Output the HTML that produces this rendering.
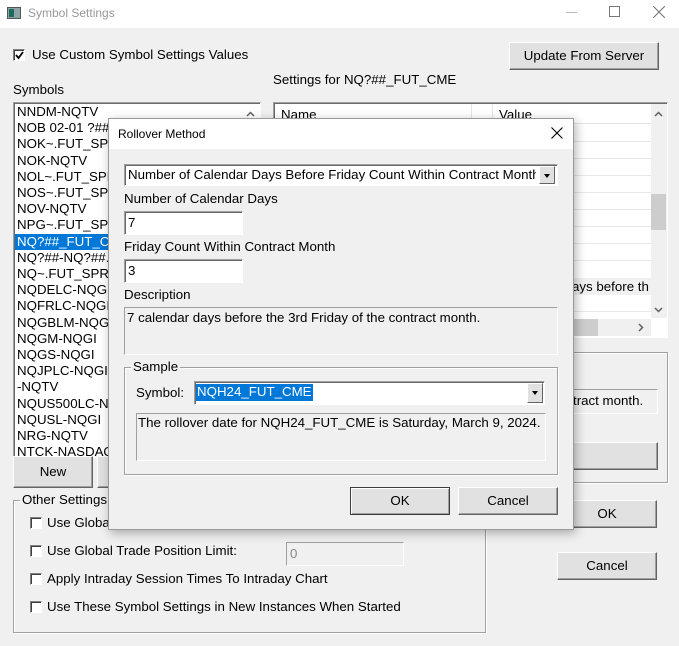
<!DOCTYPE html>
<html><head><meta charset="utf-8"><style>
*{box-sizing:border-box;margin:0;padding:0}
body{width:679px;height:646px;background:#f0f0f0;font-family:"Liberation Sans",Arial,sans-serif;font-size:13.3px;color:#000;position:relative;overflow:hidden}
.a{position:absolute;white-space:nowrap;line-height:16px}
.btn{position:absolute;background:#e1e1e1;border:1px solid;border-color:#fff #646464 #646464 #fff;box-shadow:inset -1px -1px 0 #a0a0a0;text-align:center}
.sunk{position:absolute;background:#fff;border:1px solid;border-color:#a0a0a0 #fff #fff #a0a0a0;box-shadow:inset 1px 1px 0 #696969}
.ro{position:absolute;border:1px solid;border-color:#a0a0a0 #fff #fff #a0a0a0;background:#f0f0f0}
.cb{position:absolute;width:12px;height:12px;background:#fff;border:1px solid;border-color:#808080 #fff #fff #808080;box-shadow:inset 1px 1px 0 #404040}
.grp{position:absolute;border:1px solid #a0a0a0;box-shadow:1px 1px 0 #fff inset,1px 1px 0 #fff}
.gl{position:absolute;background:#f0f0f0;padding:0 2px;line-height:16px}
.dd{position:absolute;width:16px;background:#e1e1e1;border:1px solid;border-color:#fff #646464 #646464 #fff}
.dd:after{content:"";position:absolute;left:4px;top:7px;border:3.5px solid transparent;border-top:4px solid #000;border-bottom:0}
</style></head><body>
<div class="a" style="left:0;top:0;width:679px;height:28px;background:#fff"></div>
<div class="a" style="left:7px;top:7px;width:14px;height:12px;background:#8ea3a6;border:1px solid #555"></div>
<div class="a" style="left:9px;top:9px;width:5px;height:8px;background:#1d6b5c"></div>
<div class="a" style="left:28px;top:5px;color:#999;font-size:12px">Symbol Settings</div>
<div class="a" style="left:566px;top:12px;width:11px;height:1px;background:#bbb"></div>
<div class="a" style="left:609px;top:6px;width:11px;height:11px;border:1px solid #777"></div>
<svg class="a" style="left:653px;top:6px" width="12" height="12"><path d="M0 0L12 12M12 0L0 12" stroke="#777" stroke-width="1.1"/></svg>

<div class="cb" style="left:13px;top:49px;background:#fff"></div>
<svg class="a" style="left:15px;top:51px" width="9" height="9"><path d="M1 4L3.5 7L8 1" stroke="#000" stroke-width="1.8" fill="none"/></svg>
<div class="a" style="left:32px;top:47px">Use Custom Symbol Settings Values</div>
<div class="btn" style="left:509px;top:42px;width:150px;height:28px;line-height:25px">Update From Server</div>
<div class="a" style="left:13px;top:82px">Symbols</div>
<div class="a" style="left:273px;top:72px">Settings for NQ?##_FUT_CME</div>

<div class="sunk" style="left:13px;top:102px;width:248px;height:356px;overflow:hidden">
<div style="position:absolute;left:3px;top:1px;line-height:16.2px">
<div>NNDM-NQTV</div><div>NOB 02-01 ?##.FUT</div><div>NOK~.FUT_SPR</div><div>NOK-NQTV</div><div>NOL~.FUT_SPR</div><div>NOS~.FUT_SPR</div><div>NOV-NQTV</div><div>NPG~.FUT_SPR</div>
<div style="background:#0078d7;color:#fff;margin-left:-2px;padding-left:2px;width:240px">NQ?##_FUT_CME</div>
<div>NQ?##-NQ?##.FUT</div><div>NQ~.FUT_SPR</div><div>NQDELC-NQGI</div><div>NQFRLC-NQGI</div><div>NQGBLM-NQGI</div><div>NQGM-NQGI</div><div>NQGS-NQGI</div><div>NQJPLC-NQGI</div><div>-NQTV</div><div>NQUS500LC-NQGI</div><div>NQUSL-NQGI</div><div>NRG-NQTV</div><div>NTCK-NASDAQ</div></div>
</div>
<svg class="a" style="left:246px;top:111px" width="9" height="6"><path d="M1 5L4.5 1.5L8 5" stroke="#606060" stroke-width="1.5" fill="none"/></svg>
<div class="btn" style="left:13px;top:456px;width:80px;height:32px;line-height:29px">New</div>
<div class="btn" style="left:97px;top:456px;width:80px;height:32px"></div>

<div class="grp" style="left:13px;top:500px;width:473px;height:133px"></div>
<div class="gl" style="left:20px;top:492px">Other Settings</div>
<div class="cb" style="left:30px;top:517px"></div><div class="a" style="left:47px;top:515px">Use Global</div>
<div class="ro" style="left:286px;top:516px;width:118px;height:14px"></div>
<div class="cb" style="left:30px;top:545px"></div><div class="a" style="left:47px;top:543px">Use Global Trade Position Limit:</div>
<div class="ro" style="left:286px;top:542px;width:118px;height:24px"><span style="position:absolute;left:3px;top:3px;color:#888">0</span></div>
<div class="cb" style="left:30px;top:573px"></div><div class="a" style="left:47px;top:571px">Apply Intraday Session Times To Intraday Chart</div>
<div class="cb" style="left:30px;top:601px"></div><div class="a" style="left:47px;top:599px">Use These Symbol Settings in New Instances When Started</div>

<div class="sunk" style="left:273px;top:102px;width:395px;height:236px;background:#fff"></div>
<div class="a" style="left:275px;top:104px;width:376px;height:20px;background:#fff;border-bottom:1px solid #e5e5e5"></div>
<div class="a" style="left:471px;top:104px;width:1px;height:20px;background:#e5e5e5"></div>
<div class="a" style="left:492px;top:104px;width:1px;height:20px;background:#e5e5e5"></div>
<div class="a" style="left:281px;top:107px">Name</div><div class="a" style="left:499px;top:107px">Value</div>
<div class="a" style="left:572px;top:141px;width:79px;height:1px;background:#e8e8e8"></div>
<div class="a" style="left:572px;top:158px;width:79px;height:1px;background:#e8e8e8"></div>
<div class="a" style="left:572px;top:175px;width:79px;height:1px;background:#e8e8e8"></div>
<div class="a" style="left:572px;top:192px;width:79px;height:1px;background:#e8e8e8"></div>
<div class="a" style="left:572px;top:209px;width:79px;height:1px;background:#e8e8e8"></div>
<div class="a" style="left:572px;top:226px;width:79px;height:1px;background:#e8e8e8"></div>
<div class="a" style="left:572px;top:243px;width:79px;height:1px;background:#e8e8e8"></div>
<div class="a" style="left:572px;top:260px;width:79px;height:1px;background:#e8e8e8"></div>
<div class="a" style="left:572px;top:278px;width:79px;height:17px;background:#f0f0f0;line-height:17px;overflow:hidden">ays before th</div>
<div class="a" style="left:572px;top:311px;width:79px;height:1px;background:#e8e8e8"></div>
<div class="a" style="left:651px;top:104px;width:16px;height:214px;background:#f0f0f0"></div>
<div class="a" style="left:651px;top:194px;width:15px;height:36px;background:#cdcdcd"></div>
<svg class="a" style="left:654px;top:111px" width="9" height="6"><path d="M1 5L4.5 1.5L8 5" stroke="#606060" stroke-width="1.5" fill="none"/></svg>
<svg class="a" style="left:654px;top:307px" width="9" height="6"><path d="M1 1L4.5 4.5L8 1" stroke="#606060" stroke-width="1.5" fill="none"/></svg>
<div class="a" style="left:572px;top:319px;width:79px;height:17px;background:#f0f0f0"></div>
<div class="a" style="left:572px;top:319px;width:26px;height:17px;background:#cdcdcd"></div>
<svg class="a" style="left:638px;top:323px" width="6" height="9"><path d="M1 1L4.5 4.5L1 8" stroke="#606060" stroke-width="1.5" fill="none"/></svg>

<div class="grp" style="left:572px;top:352px;width:96px;height:131px"></div>
<div class="ro" style="left:572px;top:389px;width:86px;height:25px"><span style="position:absolute;left:0;top:3px">tract month.</span></div>
<div class="btn" style="left:572px;top:442px;width:86px;height:28px"></div>
<div class="btn" style="left:557px;top:500px;width:100px;height:28px;line-height:25px">OK</div>
<div class="btn" style="left:557px;top:552px;width:100px;height:28px;line-height:25px">Cancel</div>

<div class="a" style="left:108px;top:118px;width:466px;height:412px;background:#f0f0f0;border:1px solid #9a9a9a;box-shadow:2px 3px 10px rgba(0,0,0,.3)"></div>
<div class="a" style="left:109px;top:119px;width:464px;height:30px;background:#fff"></div>
<div class="a" style="left:118px;top:126px;font-size:12px">Rollover Method</div>
<svg class="a" style="left:551px;top:127px" width="12" height="12"><path d="M0.5 0.5L11.5 11.5M11.5 0.5L0.5 11.5" stroke="#000" stroke-width="1.1"/></svg>

<div class="sunk" style="left:124px;top:164px;width:434px;height:22px"></div>
<div class="a" style="left:128px;top:167px;width:408px;overflow:hidden">Number of Calendar Days Before Friday Count Within Contract Month (</div>
<div class="dd" style="left:539px;top:166px;height:18px"></div>
<div class="a" style="left:124px;top:191px">Number of Calendar Days</div>
<div class="sunk" style="left:124px;top:211px;width:119px;height:24px"><span style="position:absolute;left:3px;top:3px">7</span></div>
<div class="a" style="left:124px;top:239px">Friday Count Within Contract Month</div>
<div class="sunk" style="left:124px;top:259px;width:119px;height:24px"><span style="position:absolute;left:3px;top:3px">3</span></div>
<div class="a" style="left:124px;top:287px">Description</div>
<div class="ro" style="left:124px;top:307px;width:434px;height:48px"><span style="position:absolute;left:2px;top:2px">7 calendar days before the 3rd Friday of the contract month.</span></div>

<div class="grp" style="left:124px;top:367px;width:434px;height:108px"></div>
<div class="gl" style="left:131px;top:359px">Sample</div>
<div class="a" style="left:136px;top:385px">Symbol:</div>
<div class="sunk" style="left:194px;top:381px;width:351px;height:24px"></div>
<div class="a" style="left:196px;top:384px;width:117px;height:17px;background:#0078d7;color:#fff;padding-left:1px">NQH24_FUT_CME</div>
<div class="dd" style="left:527px;top:383px;height:20px"></div>
<div class="ro" style="left:136px;top:413px;width:410px;height:48px"><span style="position:absolute;left:1px;top:1px">The rollover date for NQH24_FUT_CME is Saturday, March 9, 2024.</span></div>

<div class="btn" style="left:350px;top:487px;width:100px;height:28px;line-height:25px;border:1px solid #3c3c3c;box-shadow:inset 1px 1px 0 #fff,inset -1px -1px 0 #a0a0a0">OK</div>
<div class="btn" style="left:458px;top:487px;width:100px;height:28px;line-height:25px">Cancel</div>
</body></html>
